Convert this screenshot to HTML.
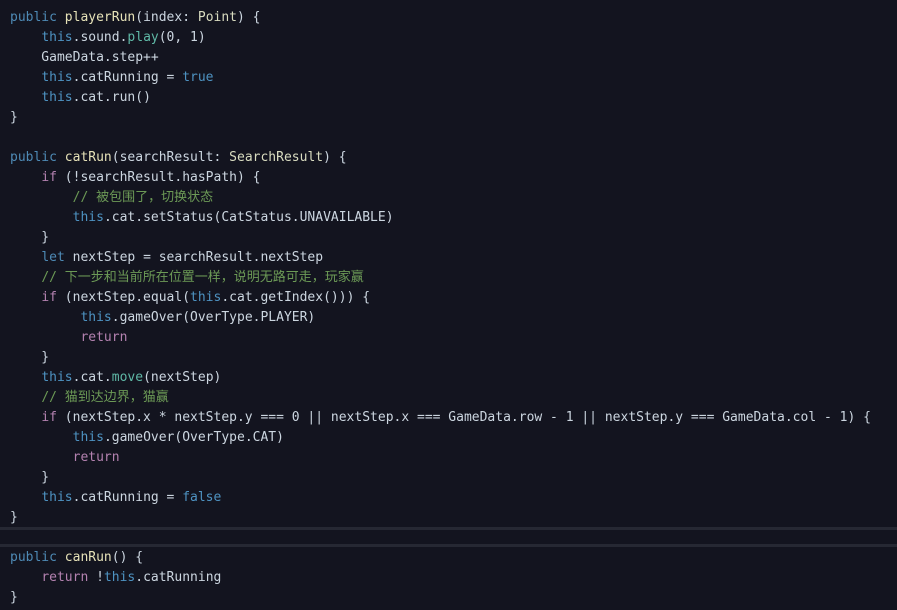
<!DOCTYPE html>
<html><head><meta charset="utf-8"><style>
html,body{margin:0;padding:0;background:#13141f;width:897px;height:610px;overflow:hidden}
pre{margin:0;position:absolute;left:10px;top:8px;font-family:"DejaVu Sans Mono","Liberation Mono","Noto Sans CJK SC",monospace;font-size:13px;line-height:20px;color:#ccd6e0}
.k{color:#4e8ab5}.f{color:#e6e2b8}.t{color:#4e93c2}.m{color:#5fb8a6}.c{color:#6c9a56}.r{color:#b482b0}.y{color:#d9dcc0}.b{color:#4e93c2}
.z{font-size:13px;line-height:10px}
.band{position:absolute;left:0;width:897px;height:3px;background:#262833}
</style></head><body>
<div class="band" style="top:527px"></div>
<div class="band" style="top:544px"></div>
<pre><span class="k">public</span> <span class="f">playerRun</span>(index: <span class="y">Point</span>) {
    <span class="t">this</span>.sound.<span class="m">play</span>(0, 1)
    GameData.step++
    <span class="t">this</span>.catRunning = <span class="b">true</span>
    <span class="t">this</span>.cat.run()
}

<span class="k">public</span> <span class="f">catRun</span>(searchResult: <span class="y">SearchResult</span>) {
    <span class="r">if</span> (!searchResult.hasPath) {
        <span class="c">// <span class="z">被包围了，切换状态</span></span>
        <span class="t">this</span>.cat.setStatus(CatStatus.UNAVAILABLE)
    }
    <span class="k">let</span> nextStep = searchResult.nextStep
    <span class="c">// <span class="z">下一步和当前所在位置一样，说明无路可走，玩家赢</span></span>
    <span class="r">if</span> (nextStep.equal(<span class="t">this</span>.cat.getIndex())) {
         <span class="t">this</span>.gameOver(OverType.PLAYER)
         <span class="r">return</span>
    }
    <span class="t">this</span>.cat.<span class="m">move</span>(nextStep)
    <span class="c">// <span class="z">猫到达边界，猫赢</span></span>
    <span class="r">if</span> (nextStep.x * nextStep.y === 0 || nextStep.x === GameData.row - 1 || nextStep.y === GameData.col - 1) {
        <span class="t">this</span>.gameOver(OverType.CAT)
        <span class="r">return</span>
    }
    <span class="t">this</span>.catRunning = <span class="b">false</span>
}

<span class="k">public</span> <span class="f">canRun</span>() {
    <span class="r">return</span> !<span class="t">this</span>.catRunning
}</pre>
</body></html>
